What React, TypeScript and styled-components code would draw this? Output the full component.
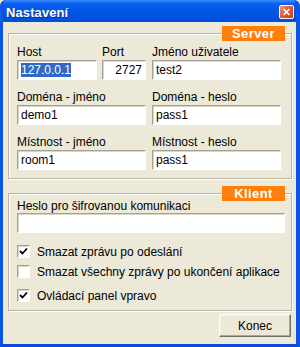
import React from 'react'
import styled, {createGlobalStyle} from 'styled-components'

const GlobalStyle = createGlobalStyle`
    html, body {
        margin: 0;
        padding: 0;
        background: #ece9d8;
    }
    body {
        font-family: "Liberation Sans", Arial, sans-serif;
        font-size: 12px;
        color: #000;
    }
`

const Window = styled.div`
    width: 300px;
    height: 347px;
    box-sizing: border-box;
    display: flex;
    flex-direction: column;
    background: #0054e3;
    border-left: 3px solid #0a55e6;
    border-right: 4px solid #0a55e6;
    border-bottom: 3px solid #0a4ad8;
    border-radius: 6px 6px 0 0;
    overflow: hidden;
`

const TitleBar = styled.div`
    height: 22px;
    flex: none;
    display: flex;
    align-items: center;
    justify-content: space-between;
    margin: 0 -4px 0 -3px;
    padding: 0 6px 0 6px;
    background: linear-gradient(#3a8cff 0%, #0a5fef 18%, #0054e3 60%, #0050dc 100%);
`

const Title = styled.div`
    color: #fff;
    font-weight: bold;
    font-size: 13px;
    letter-spacing: 0.1px;
    text-shadow: 1px 1px 0 #0a2f8c;
    padding-top: 2px;
`

const CloseButton = styled.div`
    width: 15px;
    height: 14px;
    box-sizing: border-box;
    margin-top: 2px;
    border: 1px solid #fff;
    border-radius: 2px;
    background: linear-gradient(135deg, #f09a7c 0%, #e25a35 45%, #c8401b 100%);
    display: flex;
    align-items: center;
    justify-content: center;
`

const Body = styled.div`
    flex: 1;
    display: flex;
    flex-direction: column;
    gap: 14px;
    background: #ece9d8;
    padding: 11px 4px 7px 5px;
`

// etched group frame, padding differs between the two groups
const Group = styled.div<{$height: number; $padTop: number}>`
    position: relative;
    height: ${(p) => p.$height}px;
    box-sizing: border-box;
    border: 1px solid #b9b6a8;
    box-shadow: inset 1px 1px 0 #fff, 1px 1px 0 #fff;
    padding: ${(p) => p.$padTop}px 10px 0 8px;
`

const GroupTitle = styled.div`
    position: absolute;
    top: -8px;
    right: 6px;
    width: 63px;
    height: 15px;
    background: #ff7f0a;
    color: #fff;
    font-weight: bold;
    font-size: 13px;
    letter-spacing: 0.4px;
    line-height: 15px;
    text-align: center;
`

const Grid = styled.div`
    display: grid;
    grid-template-columns: 129px 129px;
    column-gap: 6px;
    row-gap: 11px;
`

const Pair = styled.div`
    display: flex;
    gap: 5px;
`

const Item = styled.div<{$width?: number}>`
    display: flex;
    flex-direction: column;
    width: ${(p) => (p.$width ? `${p.$width}px` : 'auto')};
`

const Label = styled.div<{$height?: number}>`
    height: ${(p) => p.$height || 14}px;
    line-height: 13px;
    white-space: nowrap;
`

const Field = styled.div<{$align?: string}>`
    height: 20px;
    box-sizing: border-box;
    background: #fff;
    border-top: 1px solid #a5a294;
    border-left: 1px solid #a5a294;
    border-bottom: 1px solid #fff;
    border-right: 1px solid #fff;
    box-shadow: inset 1px 1px 0 #d9d6c9;
    padding: 0 3px;
    line-height: 18px;
    text-align: ${(p) => p.$align || 'left'};
    white-space: nowrap;
    overflow: hidden;
`

const Selected = styled.span`
    background: #316ac5;
    color: #fff;
`

const ClientField = styled(Field)`
    width: 268px;
    margin-bottom: 12px;
`

const CheckRow = styled.div<{$gap: number}>`
    display: flex;
    align-items: center;
    gap: 7px;
    height: 13px;
    margin-bottom: ${(p) => p.$gap}px;
`

const Box = styled.div`
    width: 13px;
    height: 13px;
    box-sizing: border-box;
    background: #fff;
    border-top: 1px solid #a5a294;
    border-left: 1px solid #a5a294;
    border-bottom: 1px solid #fff;
    border-right: 1px solid #fff;
    box-shadow: inset 1px 1px 0 #d9d6c9;
    display: flex;
    align-items: center;
    justify-content: center;
`

const Footer = styled.div`
    display: flex;
    justify-content: flex-end;
    margin-top: -11px;
    padding-right: 1px;
`

const Button = styled.button`
    width: 72px;
    height: 23px;
    box-sizing: border-box;
    font-family: "Liberation Sans", Arial, sans-serif;
    font-size: 12px;
    color: #000;
    background: #ece9d8;
    border: 1px solid;
    border-color: #fff #716f64 #716f64 #fff;
    box-shadow: inset -1px -1px 0 #aca899, inset 1px 1px 0 #f1efe2;
    padding: 0;
`

const Check: React.FC<{checked: boolean; label: string; gap: number}> = ({checked, label, gap}) => (
    <CheckRow $gap={gap}>
        <Box>
            {checked && (
                <svg width="9" height="9" viewBox="0 0 9 9">
                    <path d="M1 4 L3.5 6.5 L8 1.5" fill="none" stroke="#000" strokeWidth="1.8" />
                </svg>
            )}
        </Box>
        <span>{label}</span>
    </CheckRow>
)

export default function App() {
    return (
        <>
            <GlobalStyle />
            <Window>
                <TitleBar>
                    <Title>Nastavení</Title>
                    <CloseButton>
                        <svg width="9" height="8" viewBox="0 0 9 8">
                            <path d="M1.5 1 L7.5 7 M7.5 1 L1.5 7" stroke="#fff" strokeWidth="1.6" />
                        </svg>
                    </CloseButton>
                </TitleBar>
                <Body>
                    <Group $height={146} $padTop={12}>
                        <GroupTitle>Server</GroupTitle>
                        <Grid>
                            <Pair>
                                <Item $width={80}>
                                    <Label>Host</Label>
                                    <Field><Selected>127.0.0.1</Selected></Field>
                                </Item>
                                <Item $width={44}>
                                    <Label>Port</Label>
                                    <Field $align="right">2727</Field>
                                </Item>
                            </Pair>
                            <Item>
                                <Label>Jméno uživatele</Label>
                                <Field>test2</Field>
                            </Item>
                            <Item>
                                <Label>Doména - jméno</Label>
                                <Field>demo1</Field>
                            </Item>
                            <Item>
                                <Label>Doména - heslo</Label>
                                <Field>pass1</Field>
                            </Item>
                            <Item>
                                <Label>Místnost - jméno</Label>
                                <Field>room1</Field>
                            </Item>
                            <Item>
                                <Label>Místnost - heslo</Label>
                                <Field>pass1</Field>
                            </Item>
                        </Grid>
                    </Group>
                    <Group $height={118} $padTop={6}>
                        <GroupTitle>Klient</GroupTitle>
                        <Label $height={13}>Heslo pro šifrovanou komunikaci</Label>
                        <ClientField />
                        <Check checked label="Smazat zprávu po odeslání" gap={7} />
                        <Check checked={false} label="Smazat všechny zprávy po ukončení aplikace" gap={11} />
                        <Check checked label="Ovládací panel vpravo" gap={0} />
                    </Group>
                    <Footer>
                        <Button>Konec</Button>
                    </Footer>
                </Body>
            </Window>
        </>
    )
}
